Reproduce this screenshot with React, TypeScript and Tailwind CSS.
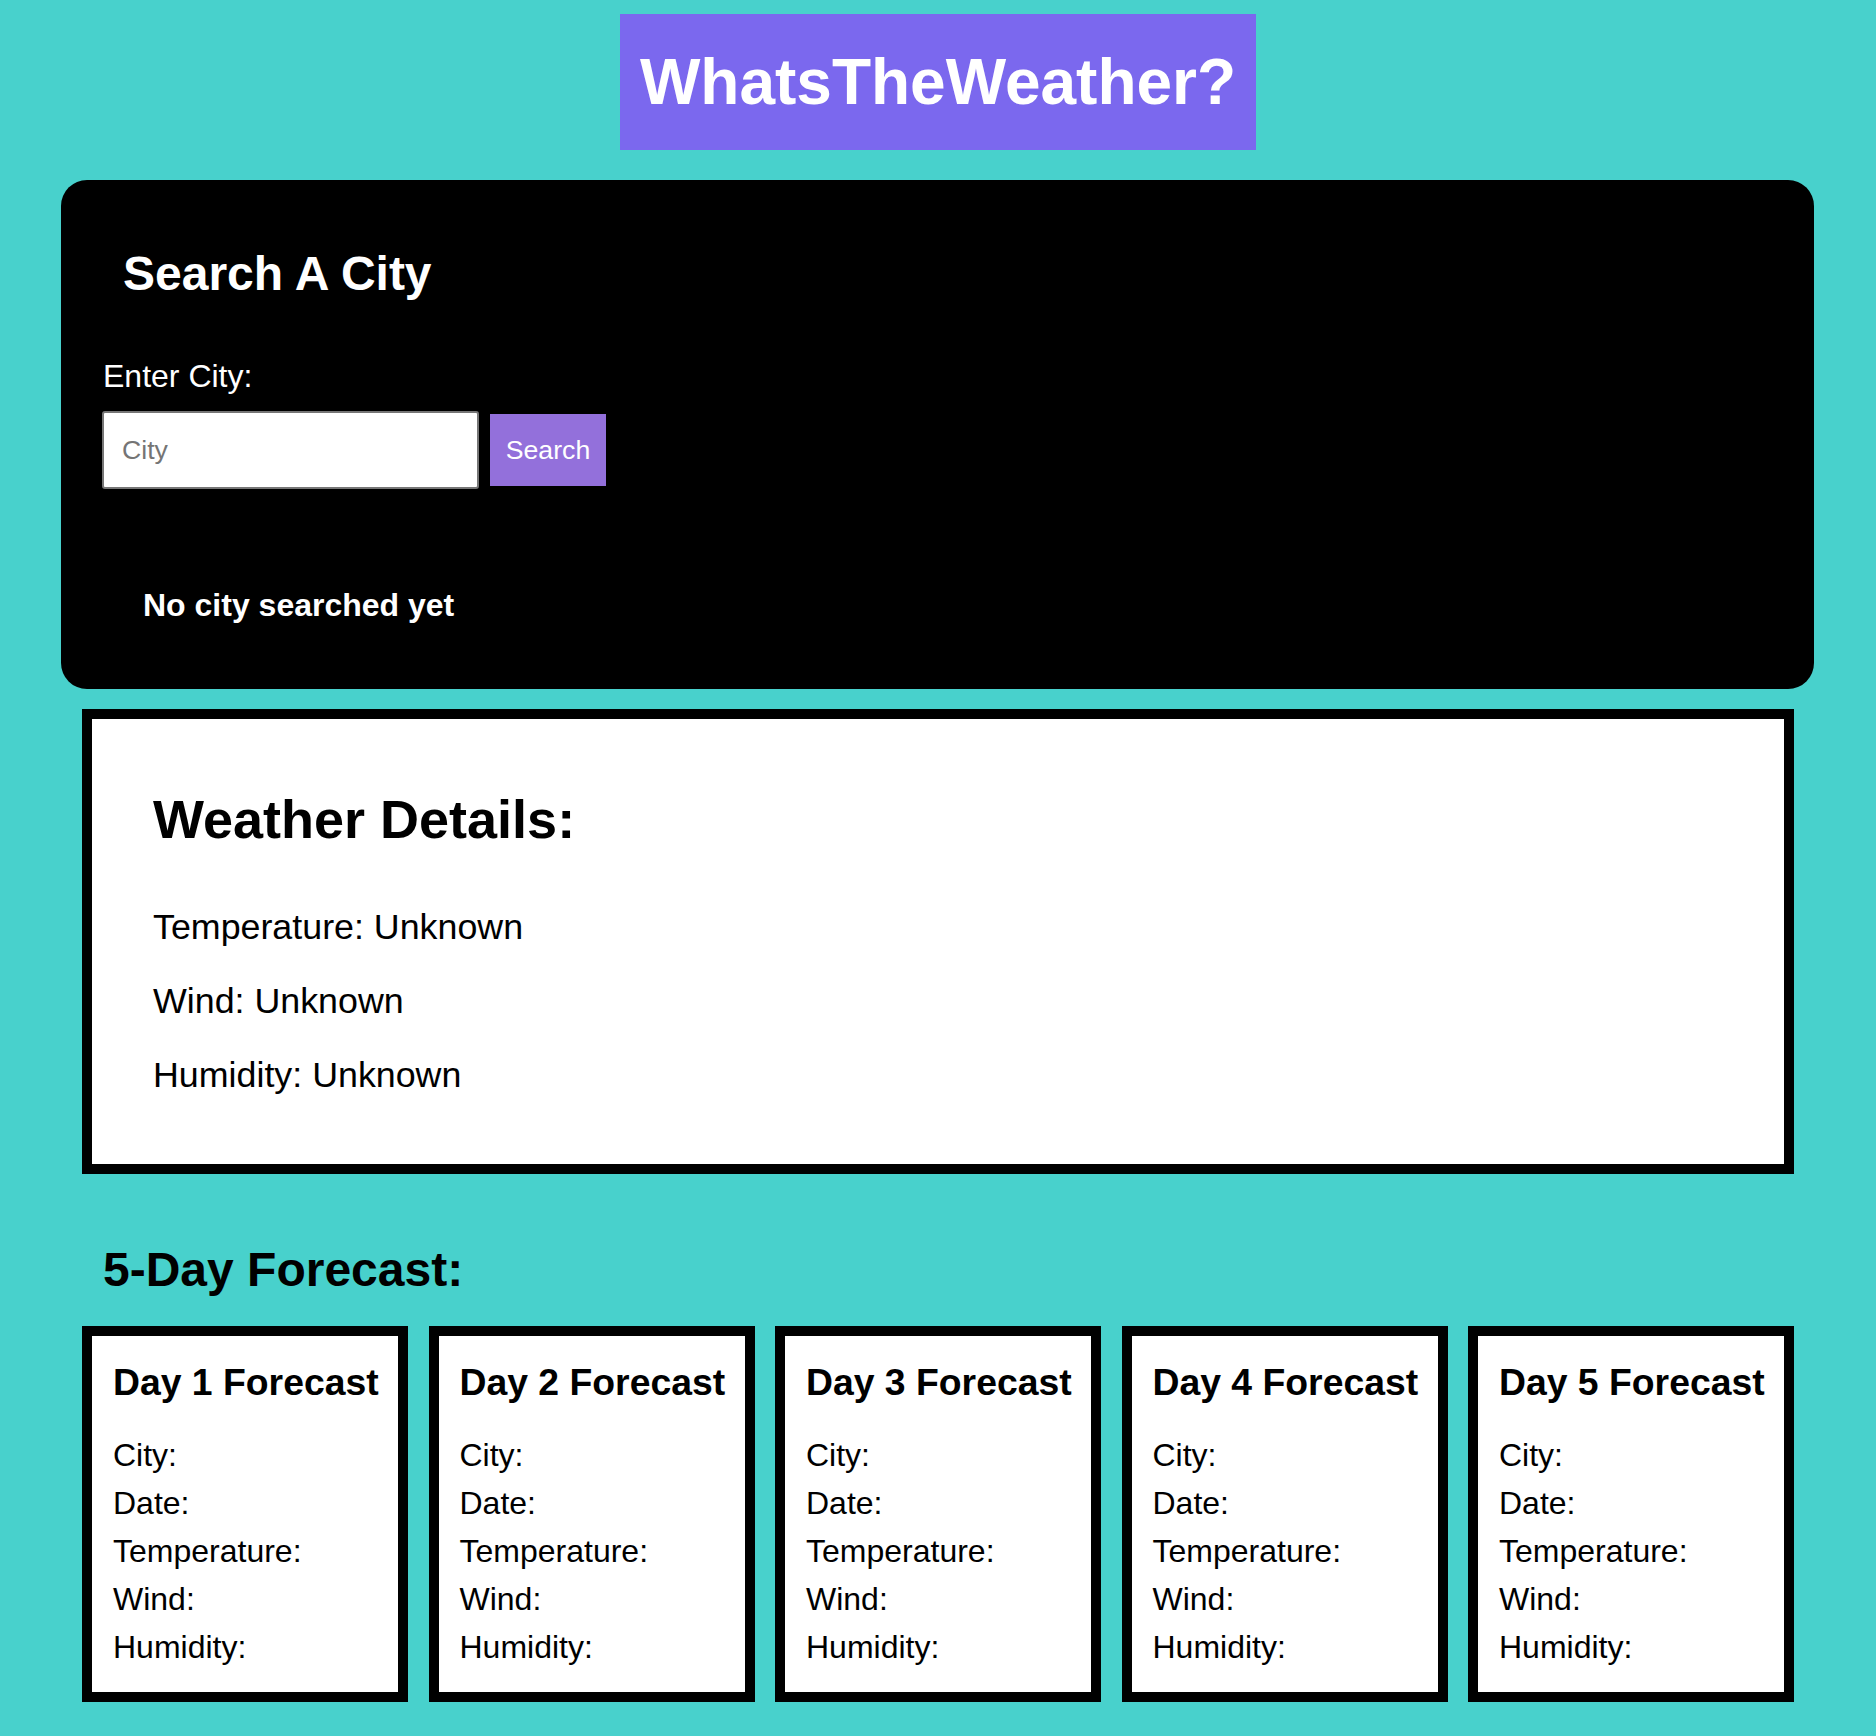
const days = [1, 2, 3, 4, 5];
const fields = ["City:", "Date:", "Temperature:", "Wind:", "Humidity:"];

function SearchPanel() {
  return (
    <section className="ml-[61px] mt-[30px] w-[1753px] rounded-[26px] bg-black pb-[68px] pt-[70px] text-white">
      <h2 className="ml-[62px] text-[48px] font-bold leading-none">Search A City</h2>
      <label htmlFor="city" className="ml-[42px] mt-[62px] block text-[32px] leading-none">
        Enter City:
      </label>
      <div className="ml-[41px] mt-[19px] flex items-center gap-[11px]">
        <input
          id="city"
          type="text"
          placeholder="City"
          className="h-[78px] w-[377px] rounded-[3px] border-2 border-[#767676] bg-white px-[18px] text-[26.67px] text-black outline-none placeholder:text-[#757575]"
        />
        <button className="h-[72px] w-[116px] bg-[#9370db] text-[26.67px] text-white">Search</button>
      </div>
      <p className="ml-[82px] mt-[100px] text-[32px] font-bold leading-none">No city searched yet</p>
    </section>
  );
}

function WeatherDetails() {
  return (
    <section className="mt-[20px] border-[10px] border-black bg-white pb-[70px] pl-[61px] pt-[73px] text-black">
      <h2 className="text-[54px] font-bold leading-none">Weather Details:</h2>
      <div className="mt-[64px] flex flex-col gap-[38.2px] text-[35.8px] leading-none">
        <p>Temperature: Unknown</p>
        <p>Wind: Unknown</p>
        <p>Humidity: Unknown</p>
      </div>
    </section>
  );
}

function ForecastCard({ day }: { day: number }) {
  return (
    <div className="flex-1 border-[10px] border-black bg-white pb-[21px] pl-[21px] pt-[28px] text-black">
      <h3 className="text-[37.33px] font-bold leading-none">Day {day} Forecast</h3>
      <div className="mt-[30px] text-[32px] leading-[48px]">
        {fields.map((f) => (
          <p key={f}>{f}</p>
        ))}
      </div>
    </div>
  );
}

export default function App() {
  return (
    <div className="min-h-screen bg-[#48d1cc] pt-[14px] font-['Liberation_Sans',Arial,sans-serif]">
      <header className="mx-auto flex h-[136px] w-[636px] items-center justify-center bg-[#7b68ee]">
        <h1 className="text-[64px] font-bold leading-none text-white">WhatsTheWeather?</h1>
      </header>
      <SearchPanel />
      <main className="mx-auto w-[1712px]">
        <WeatherDetails />
        <h2 className="ml-[21px] mt-[72px] text-[48px] font-bold leading-none text-black">5-Day Forecast:</h2>
        <div className="mt-[32px] flex gap-[20.5px]">
          {days.map((d) => (
            <ForecastCard key={d} day={d} />
          ))}
        </div>
      </main>
    </div>
  );
}
